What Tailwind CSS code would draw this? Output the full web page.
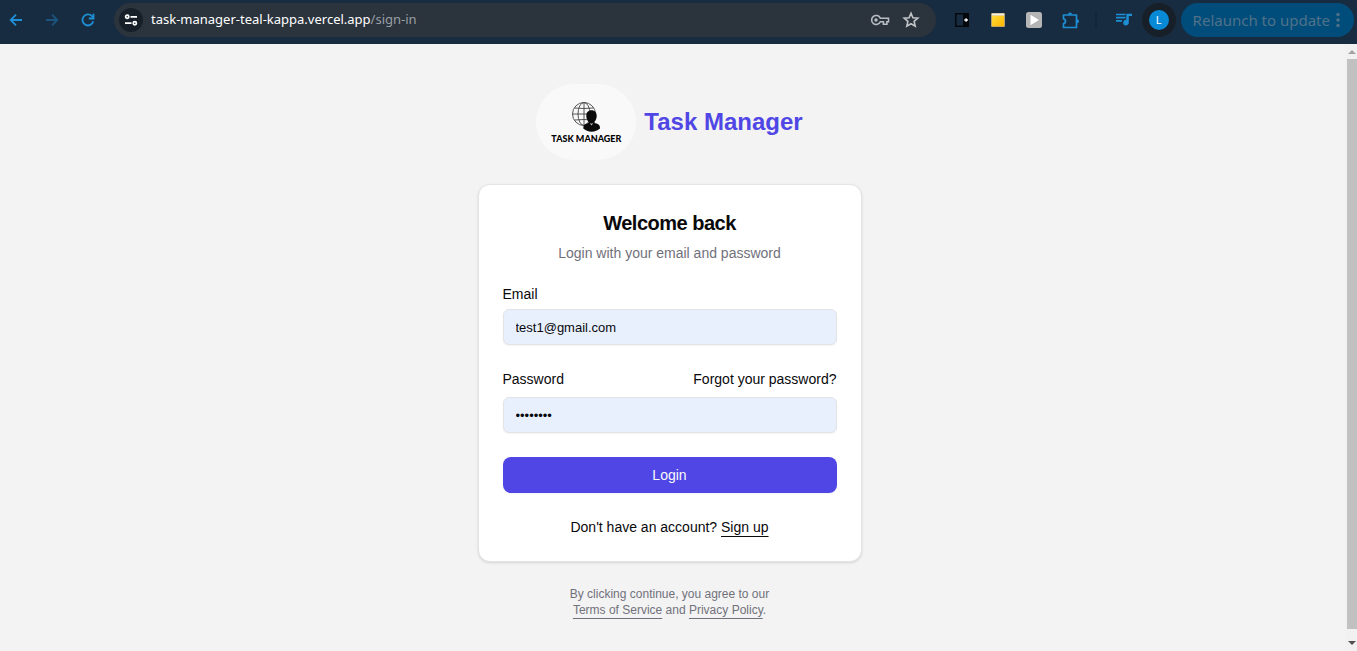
<!DOCTYPE html>
<html lang="en">
<head>
<meta charset="utf-8">
<meta name="viewport" content="width=device-width, initial-scale=1">
<title>Task Manager - Sign in</title>
<script src="https://cdn.jsdelivr.net/npm/@tailwindcss/browser@4"></script>
</head>
<body class="flex h-screen flex-col overflow-hidden bg-[#f3f3f3] font-['Liberation_Sans',sans-serif] text-zinc-950">

<header class="flex h-11 shrink-0 items-start bg-[#172c40] pt-[3px] pr-[3px] font-['Noto_Sans',sans-serif] text-[#1e8fd5]">
  <nav class="flex h-[34px] items-center gap-5 pr-[18px] pl-2" aria-label="Browser navigation">
    <button type="button" aria-label="Back" class="size-4"><svg viewBox="0 0 16 16" class="size-4" fill="none" stroke="currentColor" stroke-width="1.8"><path d="M14 8H3M8 2.7 2.7 8 8 13.3"/></svg></button>
    <button type="button" aria-label="Forward" class="size-4 text-[#1b557f]"><svg viewBox="0 0 16 16" class="size-4" fill="none" stroke="currentColor" stroke-width="1.8"><path d="M2 8h11M8 2.7 13.3 8 8 13.3"/></svg></button>
    <button type="button" aria-label="Reload" class="size-4"><svg viewBox="0 0 16 16" class="size-4" fill="none" stroke="currentColor" stroke-width="1.8"><path d="M13.3 9.3A5.5 5.5 0 1 1 12 4.2L13.3 6"/><path d="M13.5 1.8v4.7H8.8"/></svg></button>
  </nav>
  <div class="flex h-[34px] min-w-0 flex-1 items-center rounded-full bg-[#2b333d] pr-4 pl-[5px]">
    <button type="button" aria-label="Site information" class="flex size-6 shrink-0 items-center justify-center rounded-full bg-[#172029] text-white"><svg viewBox="0 0 14 14" class="size-3.5" fill="none" stroke="currentColor" stroke-width="1.7"><circle cx="3.2" cy="3.8" r="1.6"/><path d="M6.5 3.8H13M1 10.2h6.5"/><circle cx="10.8" cy="10.2" r="1.6"/></svg></button>
    <span class="ml-2 flex-1 truncate text-[13px] text-[#9a9fa4]"><span class="text-white">task-manager-teal-kappa.vercel.app</span>/sign-in</span>
    <button type="button" aria-label="Passwords" class="text-[#b9bdc1]"><svg viewBox="0 0 20 16" class="h-4 w-5" fill="none" stroke="currentColor" stroke-width="1.6"><path d="M10.3 6.2h8.2v3.5h-1.6v2.5h-3.5V9.7h-3.1a4.500 4.500 0 1 1 0-3.500Z"/><circle cx="6" cy="8" r="1.7" fill="currentColor" stroke="none"/></svg></button>
    <button type="button" aria-label="Bookmark" class="ml-3 text-[#c3c6c9]"><svg viewBox="0 0 18 18" class="size-[18px]" fill="none" stroke="currentColor" stroke-width="1.6"><path d="m9 2.3 1.9 4.5 4.9.4-3.7 3.2 1.1 4.8L9 12.7l-4.2 2.5 1.1-4.8-3.7-3.2 4.9-.4Z"/></svg></button>
  </div>
  <div class="flex h-[34px] items-center gap-5 pr-[10px] pl-[18px]">
    <button type="button" aria-label="Sidebar extension" class="size-4"><svg viewBox="0 0 16 16" class="size-4"><path fill="#05090d" d="M1 1h14v14H1Z"/><path fill="#172c40" d="M2.500 2.500H9v11H2.500Z"/><path stroke="#fff" stroke-width="1.300" d="M10.300 8h3.600M12.100 6.200v3.600"/></svg></button>
    <button type="button" aria-label="Notes extension" class="size-4"><svg viewBox="0 0 16 16" class="size-4"><defs><linearGradient id="note" x2="1" y2="1"><stop stop-color="#ffdc3a"/><stop offset="1" stop-color="#ffb500"/></linearGradient></defs><rect x="1" y="1" width="14" height="14" rx="1" fill="#b3a172"/><path fill="url(#note)" d="M2 3.500h12v10.700H2Z"/><path fill="#f4efe1" d="M2 1.500h12v2H2Z"/></svg></button>
    <button type="button" aria-label="Video extension" class="size-4"><svg viewBox="0 0 16 16" class="size-4"><rect width="16" height="16" rx="2.500" fill="#b5b5b5"/><path fill="#fff" d="M4.500 2.800 13 8l-8.500 5.200Z"/></svg></button>
    <button type="button" aria-label="Extensions" class="size-[17px]"><svg viewBox="0 0 17 17" class="size-[17px]" fill="none" stroke="currentColor" stroke-width="1.700" stroke-linejoin="round"><path d="M1.500 3h13v12.500h-13v-3.800a2.500 2.500 0 0 0 0-4.900Z"/><path fill="currentColor" stroke="none" d="M6 2.500a2 2 0 0 1 4 0ZM15 7.200a2 2 0 0 1 0 4Z"/></svg></button>
  </div>
  <div class="flex h-[34px] items-center">
    <span class="mr-[18px] ml-1.5 h-4 w-0.5 bg-[#15253a]"></span>
    <button type="button" aria-label="Media controls" class="h-4 w-[17px]"><svg viewBox="0 0 17 16" class="h-4 w-[17px]"><path fill="none" stroke="currentColor" stroke-width="1.700" d="M1 2.500h9.500M1 5.700h9.500M1 8.900h6"/><path fill="currentColor" d="M11.300 1.700H17v2.200h-3.200v6.700a2.800 2.800 0 1 1-2.500-2.800Z"/></svg></button>
    <button type="button" aria-label="Profile" class="mr-[5px] ml-2.5 flex size-[34px] items-center justify-center rounded-full bg-[#172029]"><span class="flex size-5 items-center justify-center rounded-full bg-[#0889d6] text-[11px] text-white">L</span></button>
  </div>
  <button type="button" class="flex h-[34px] items-center gap-1 rounded-full bg-[#004d7c] px-3 text-[15px] text-[#507187]">Relaunch to update
    <svg viewBox="0 0 8 16" class="h-4 w-2" fill="currentColor"><circle cx="4" cy="2.500" r="1.700"/><circle cx="4" cy="8" r="1.700"/><circle cx="4" cy="13.500" r="1.700"/></svg>
  </button>
</header>

<div class="flex min-h-0 flex-1">
  <main class="flex flex-1 flex-col items-center gap-6 overflow-hidden pt-10 pr-1.5">
    <a href="#" class="flex items-center gap-2 text-2xl font-bold text-[#4f46e5]">
      <span class="flex h-[76px] w-[100px] flex-col items-center rounded-[38px] bg-[#f9f9f9] pt-[17px] text-black">
        <svg viewBox="0 0 30 32" class="h-8 w-[30px]">
          <g fill="none" stroke="#444" stroke-width=".9"><circle cx="13" cy="13" r="11.500"/><ellipse cx="13" cy="13" rx="6" ry="11.500"/><path d="M13 1.500v23M1.500 13h23M3.500 7q9.500 1 19 0M3.500 19q9.500-1 19 0"/></g>
          <path fill="#0b0b0b" d="M20.500 9.200c3.300 0 5.200 2.200 5.200 5.700 0 2.600-1.100 4.700-2.500 6 .4.900 1.300 1.300 2.500 1.700 2.200.7 3.500 2.300 3.300 5-2.200 2-5.100 3.100-8.400 3.100s-6.200-1.100-8.300-3.100c-.2-2.700 1-4.300 3.200-5 1.200-.4 2-.8 2.400-1.700-1.500-1.300-2.600-3.400-2.600-6 0-3.500 1.900-5.700 5.200-5.700Z"/>
          <path fill="#c9c9c9" d="m18.700 22 1.800 2.500 1.800-2.500-1.800.7Z"/>
        </svg>
        <span class="text-[9px] leading-3 font-black whitespace-nowrap font-['Lato',sans-serif]">TASK MANAGER</span>
      </span>
      Task Manager
    </a>

    <section class="flex w-full max-w-sm flex-col gap-6 rounded-xl border border-zinc-200 bg-white p-6 text-sm shadow-sm">
      <div class="flex flex-col gap-1.5 text-center">
        <h1 class="text-xl leading-7 font-bold tracking-tight">Welcome back</h1>
        <p class="text-zinc-500">Login with your email and password</p>
      </div>
      <form class="flex flex-col gap-6">
        <div class="flex flex-col gap-2">
          <label for="email" class="leading-3.5">Email</label>
          <input id="email" type="email" value="test1@gmail.com" class="h-9 w-full rounded-md border border-zinc-200 bg-[#e8f0fe] px-3 text-[13px] shadow-xs outline-none">
        </div>
        <div class="flex flex-col gap-2">
          <div class="flex justify-between">
            <label for="password">Password</label>
            <a href="#">Forgot your password?</a>
          </div>
          <input id="password" type="password" value="password" class="h-9 w-full rounded-md border border-zinc-200 bg-[#e8f0fe] px-3 text-[13px] shadow-xs outline-none">
        </div>
        <button type="button" class="h-9 w-full rounded-lg bg-[#4f46e5] text-zinc-50 shadow-xs">Login</button>
      </form>
      <p class="text-center">Don't have an account? <a href="#" class="underline underline-offset-4">Sign up</a></p>
    </section>

    <p class="text-center text-xs text-zinc-500">By clicking continue, you agree to our<br><a href="#" class="underline underline-offset-4">Terms of Service</a> and <a href="#" class="underline underline-offset-4">Privacy Policy</a>.</p>
  </main>

  <div class="flex w-3 shrink-0 flex-col items-center bg-[#f1f1f1] pl-0.5" aria-hidden="true">
    <svg viewBox="0 0 10 15" class="h-[15px] w-2.5"><path fill="#a3a3a3" d="M5 6 9 10H1Z"/></svg>
    <span class="w-full flex-1 bg-[#c1c1c1]"></span>
    <svg viewBox="0 0 10 22" class="h-[22px] w-2.5"><path fill="#505050" d="M1 12h8l-4 4Z"/></svg>
  </div>
</div>
</body>
</html>
